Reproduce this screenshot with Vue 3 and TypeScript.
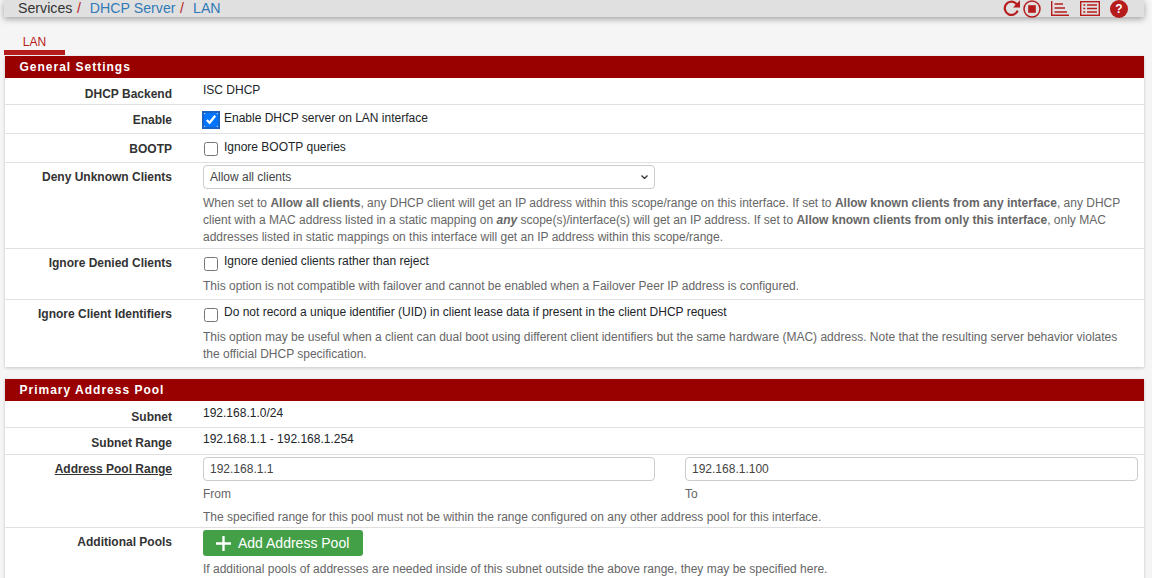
<script setup lang="ts">
const allow = 'Allow all clients'
</script>

<template>
  <div class="page">
    <header class="crumbs">
      <div class="trail">
        <span class="c-dark">Services</span><span class="sep">/</span>
        <a class="c-link">DHCP Server</a><span class="sep">/</span>
        <a class="c-link">LAN</a>
      </div>
      <div class="actions">
        <svg class="i-refresh" viewBox="0 0 17 17" width="17" height="17" fill="none" stroke="#b71c1c" stroke-width="2.2"><path d="M14.6 10.6A6.6 6.6 0 1 1 12.6 3.2L15 5.6"/><path d="M17 .3V7.4H10Z" fill="#b71c1c" stroke="none"/></svg>
        <svg class="i-stop" viewBox="0 0 18 18" width="18" height="18" fill="none" stroke="#b71c1c" stroke-width="1.5"><circle cx="9" cy="9" r="8"/><rect x="5.2" y="5.2" width="7.6" height="7.6" fill="#b71c1c" stroke="none"/></svg>
        <svg class="i-bars" viewBox="0 0 18 15" width="18" height="15" fill="none" stroke="#b71c1c" stroke-width="1.4"><path d="M.7 0V14.3H18M3.5 3H12M3.5 7H14M3.5 11H16"/></svg>
        <svg class="i-list" viewBox="0 0 20 15" width="20" height="15" fill="none" stroke="#b71c1c" stroke-width="1.4"><rect x=".7" y=".7" width="18.6" height="13.6"/><path d="M7 4H17M7 7.5H17M7 11H17M3.3 4H5.3M3.3 7.5H5.3M3.3 11H5.3"/></svg>
        <span class="help">?</span>
      </div>
    </header>

    <nav class="tabs"><span class="tab">LAN</span></nav>

    <section class="panel">
      <h2>General Settings</h2>
      <div class="row r1"><label>DHCP Backend</label><div class="field">ISC DHCP</div></div>
      <div class="row r2"><label>Enable</label><div class="field"><label class="check"><input type="checkbox" class="focused" checked />Enable DHCP server on LAN interface</label></div></div>
      <div class="row r2"><label>BOOTP</label><div class="field"><label class="check"><input type="checkbox" />Ignore BOOTP queries</label></div></div>
      <div class="row deny">
        <label>Deny Unknown Clients</label>
        <div class="field">
          <div class="select-wrap">
            <select class="control"><option>{{ allow }}</option></select>
            <svg class="chev" viewBox="0 0 7 4" width="7" height="4" fill="none" stroke="#333" stroke-width="1.3"><path d="M.5 .5l3 3 3-3"/></svg>
          </div>
          <p class="help-text tight">When set to <b>Allow all clients</b>, any DHCP client will get an IP address within this scope/range on this interface. If set to <b>Allow known clients from any interface</b>, any DHCP client with a MAC address listed in a static mapping on <b><i>any</i></b> scope(s)/interface(s) will get an IP address. If set to <b>Allow known clients from only this interface</b>, only MAC addresses listed in static mappings on this interface will get an IP address within this scope/range.</p>
        </div>
      </div>
      <div class="row">
        <label>Ignore Denied Clients</label>
        <div class="field">
          <label class="check"><input type="checkbox" />Ignore denied clients rather than reject</label>
          <p class="help-text">This option is not compatible with failover and cannot be enabled when a Failover Peer IP address is configured.</p>
        </div>
      </div>
      <div class="row">
        <label>Ignore Client Identifiers</label>
        <div class="field">
          <label class="check"><input type="checkbox" />Do not record a unique identifier (UID) in client lease data if present in the client DHCP request</label>
          <p class="help-text">This option may be useful when a client can dual boot using different client identifiers but the same hardware (MAC) address. Note that the resulting server behavior violates the official DHCP specification.</p>
        </div>
      </div>
    </section>

    <section class="panel second">
      <h2>Primary Address Pool</h2>
      <div class="row r1"><label>Subnet</label><div class="field">192.168.1.0/24</div></div>
      <div class="row r1 r1b"><label>Subnet Range</label><div class="field">192.168.1.1 - 192.168.1.254</div></div>
      <div class="row pool">
        <label><u>Address Pool Range</u></label>
        <div class="field">
          <div class="pair">
            <div><input class="control" value="192.168.1.1" /><small>From</small></div>
            <div><input class="control" value="192.168.1.100" /><small>To</small></div>
          </div>
          <p class="help-text pool-help">The specified range for this pool must not be within the range configured on any other address pool for this interface.</p>
        </div>
      </div>
      <div class="row">
        <label>Additional Pools</label>
        <div class="field">
          <button class="add"><svg viewBox="0 0 14 14" width="15" height="15" fill="none" stroke="#fff" stroke-width="2.2"><path d="M7 0V14M0 7H14"/></svg>Add Address Pool</button>
          <p class="help-text add-help">If additional pools of addresses are needed inside of this subnet outside the above range, they may be specified here.</p>
        </div>
      </div>
    </section>
  </div>
</template>

<style>
html, body { margin: 0; background: #f5f5f5; overflow: hidden; }
</style>

<style scoped>
.page { height: 578px; overflow: hidden; padding: 0 8px 0 4px; font: 12px/17px "Liberation Sans", Arial, sans-serif; color: #212529; box-sizing: border-box; }
.crumbs { height: 17px; background: #e0e0e0; box-shadow: 0 2px 6px rgba(0,0,0,.35); display: flex; justify-content: space-between; align-items: flex-start; padding: 0 16px 0 14px; font-size: 14.2px; }
.trail { margin-top: 0; }
.c-dark { color: #333; }
.c-link { color: #337ab7; }
.sep { color: #b71c1c; margin: 0 9px 0 4.5px; }
.actions { display: flex; align-items: flex-start; }
.i-stop { margin-left: 3px; }
.i-bars { margin: 1px 0 0 10px; }
.i-list { margin: 1px 0 0 11px; }
.help { width: 18px; height: 18px; margin-left: 10px; border-radius: 50%; background: #b71c1c; color: #fff; font: bold 12px/18px "Liberation Sans", sans-serif; text-align: center; }
.tabs { height: 39px; display: flex; align-items: flex-end; }
.tab { width: 61px; height: 20px; margin-bottom: 1px; box-sizing: border-box; text-align: center; color: #b71c1c; border-bottom: 5px solid #b71c1c; line-height: 15px; }
.panel { margin-left: 1px; background: #fff; box-shadow: 0 1px 3px rgba(0,0,0,.2); }
.second { margin-top: 12px; }
h2 { margin: 0; height: 22px; background: #990000; color: #fff; font: bold 12px/22px "Liberation Sans", sans-serif; letter-spacing: 1px; padding-left: 14.5px; }
.row { display: grid; grid-template-columns: 167px 1fr; column-gap: 31px; border-bottom: 1px solid #e0e0e0; padding: 3px 6px 4px 0; }
.row:last-child { border-bottom: 0; }
.row > label { font-weight: bold; text-align: right; color: #333; padding-top: 3px; }
.r1 { padding: 4px 6px 0 0; height: 22px; }
.r1 > label { padding-top: 4px; }
.r2 { padding: 4px 6px 0 0; height: 24px; }
.r1b { padding-top: 3px; height: 23px; }
.field { min-width: 0; }
.check { display: flex; align-items: flex-start; padding-top: 1px; }
.check input { width: 14px; height: 14px; margin: 4px 6px -1px 1px; accent-color: #0075ff; }
.r2 .check input { margin-top: 3px; margin-bottom: 0; }
.focused { outline: 2px solid #1a63c4; outline-offset: 0; border-radius: 2px; }
.select-wrap { position: relative; width: 452px; margin-top: -1px; }
.chev { position: absolute; right: 7px; top: 10px; pointer-events: none; }
.control { display: block; width: 100%; height: 24px; box-sizing: border-box; border: 1px solid #ccc; border-radius: 4px; background: #fff; color: #444; font: 12px "Liberation Sans", sans-serif; padding: 0 6px; appearance: none; outline: 0; }
.help-text { margin: 8px 8px 0 0; color: #666; }
.tight { margin-top: 6px; }
.deny { padding-bottom: 2px; }
.pool { padding-bottom: 1px; }
.pair { display: grid; grid-template-columns: 452px 453px; column-gap: 30px; margin-top: -1px; }
small { display: block; font-size: 12px; color: #666; margin-top: 5px; }
.pool-help { margin-top: 6px; }
.add { display: flex; align-items: center; gap: 7px; height: 26px; width: 160px; margin-top: -1px; padding: 0 0 0 13px; border: 0; border-radius: 3px; background: #43a047; color: #fff; font: 14px "Liberation Sans", sans-serif; }
.add-help { margin-top: 5px; }
</style>
